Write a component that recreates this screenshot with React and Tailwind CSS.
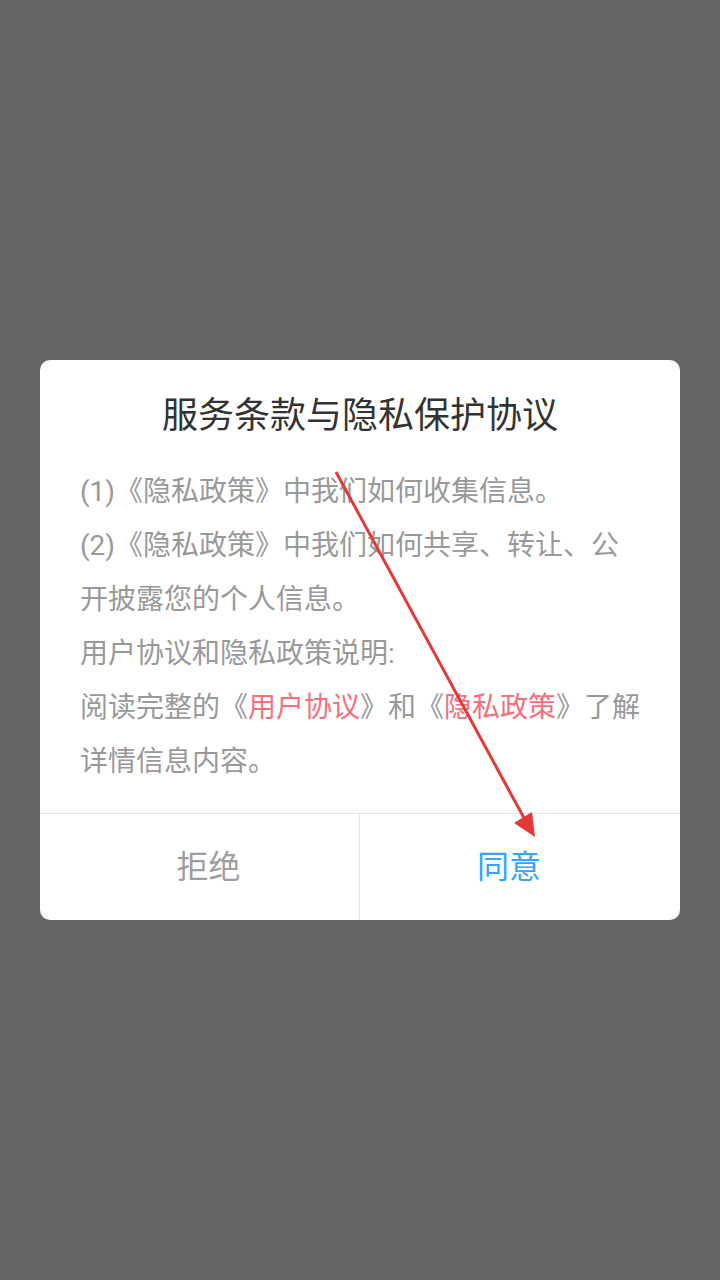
export default function App() {
  return (
    <div
      className="relative min-h-screen w-full bg-[#666666] flex items-center justify-center"
      style={{ fontFamily: 'Roboto, "Noto Sans CJK SC", sans-serif' }}
    >
      <div className="w-[640px] bg-white rounded-[10px] overflow-hidden">
        <h2 className="pt-[32px] text-center text-[36px] leading-[48px] text-[#333333]">
          服务条款与隐私保护协议
        </h2>
        <div className="mt-[25px] pl-[40px] pr-[36px] pb-[24px] text-[28px] leading-[54px] text-[#999999]">
          <p>(1)《隐私政策》中我们如何收集信息。</p>
          <p>(2)《隐私政策》中我们如何共享、转让、公开披露您的个人信息。</p>
          <p>用户协议和隐私政策说明:</p>
          <p>
            {'阅读完整的《'}<span className="text-[#f5707c]">用户协议</span>{'》和《'}<span className="text-[#f5707c]">隐私政策</span>{'》了解详情信息内容。'}
          </p>
        </div>
        <div className="flex border-t border-[#e3e3e3] h-[107px]">
          <button className="w-1/2 shrink-0 flex items-center justify-center pl-[18px] text-[32px] text-[#9e9e9e] border-r border-[#e3e3e3]">
            拒绝
          </button>
          <button className="w-1/2 shrink-0 flex items-center justify-center pr-[22px] text-[32px] text-[#35a6f5]">
            同意
          </button>
        </div>
      </div>

      <svg className="absolute left-0 top-0 pointer-events-none" width="720" height="1280">
        <line x1="336" y1="472" x2="524" y2="818" stroke="#e23a3a" strokeWidth="3" />
        <polygon points="535,837 514,823 532,812" fill="#e23a3a" />
      </svg>
    </div>
  )
}
